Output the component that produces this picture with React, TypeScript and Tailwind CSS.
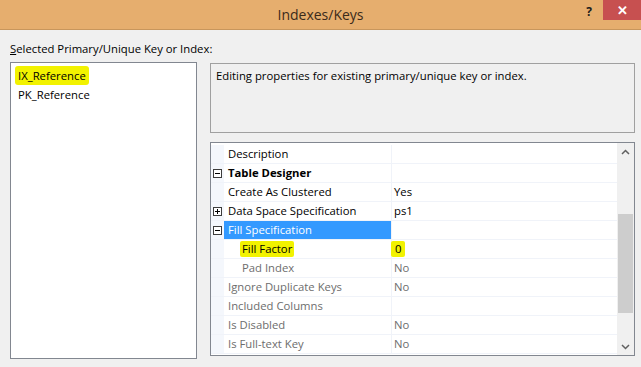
import React from 'react';

type Row = {
  name: string;
  value?: string;
  kind?: 'category' | 'selected';
  toggle?: 'plus' | 'minus';
  indent?: boolean;
  muted?: boolean;
  mark?: boolean;
};

const rows: Row[] = [
  { name: 'Description' },
  { name: 'Table Designer', kind: 'category', toggle: 'minus' },
  { name: 'Create As Clustered', value: 'Yes' },
  { name: 'Data Space Specification', value: 'ps1', toggle: 'plus' },
  { name: 'Fill Specification', kind: 'selected', toggle: 'minus' },
  { name: 'Fill Factor', value: '0', indent: true, mark: true },
  { name: 'Pad Index', value: 'No', indent: true, muted: true },
  { name: 'Ignore Duplicate Keys', value: 'No', muted: true },
  { name: 'Included Columns', muted: true },
  { name: 'Is Disabled', value: 'No', muted: true },
  { name: 'Is Full-text Key', value: 'No', muted: true },
];

function ToggleBox({ type }: { type: 'plus' | 'minus' }) {
  return (
    <svg width="9" height="9" viewBox="0 0 9 9" className="block">
      <rect x="0.5" y="0.5" width="8" height="8" fill="white" stroke="#3c3c3c" />
      <line x1="2" y1="4.5" x2="7" y2="4.5" stroke="#000" />
      {type === 'plus' && <line x1="4.5" y1="2" x2="4.5" y2="7" stroke="#000" />}
    </svg>
  );
}

function PropertyRow({ row }: { row: Row }) {
  const nameColor = row.muted ? 'text-[#6d6d6d]' : 'text-black';
  return (
    <div className="flex h-[19px] border-b border-[#f0f3f9]">
      <div className="w-[13px] flex items-center justify-center bg-[#f4f7fc]">
        {row.toggle && <ToggleBox type={row.toggle} />}
      </div>
      <div
        className={`w-[168px] flex items-center border-r border-[#f0f3f9] ${
          row.kind === 'selected' ? 'bg-[#3399ff]' : ''
        } ${row.indent ? 'pl-[18px]' : 'pl-[4px]'}`}
      >
        <span
          className={`whitespace-nowrap ${row.kind === 'category' ? 'font-bold text-black' : ''} ${
            row.kind === 'selected' ? 'text-white' : nameColor
          } ${row.mark ? 'bg-[#f2f200] px-[2px] -ml-[2px] py-[2px] rounded-[2px]' : ''}`}
        >
          {row.name}
        </span>
      </div>
      <div className="flex-1 flex items-center pl-[2px]">
        {row.value && (
          <span
            className={`${row.muted ? 'text-[#6d6d6d]' : 'text-black'} ${
              row.mark ? 'bg-[#f2f200] px-[4px] -ml-[3px] py-[2px] rounded-[2px]' : ''
            }`}
          >
            {row.value}
          </span>
        )}
      </div>
    </div>
  );
}

export default function App() {
  return (
    <div
      className="w-[641px] h-[367px] bg-[#f0f0f0] overflow-hidden flex flex-col text-[11.3px] leading-none"
      style={{ fontFamily: '"Segoe UI", "Open Sans", sans-serif' }}
    >
      {/* title bar */}
      <div className="h-[30px] bg-[#e6ae6e] border-b border-[#c8965c] grid grid-cols-[1fr_auto_1fr]">
        <div />
        <div className="flex items-center text-[14px] text-[#3a2a1a] pt-[1px]">Indexes/Keys</div>
        <div className="flex justify-end items-start">
          <div className="h-[20px] w-[10px] mt-[2px] flex items-center justify-center text-[12px] font-bold text-[#1c1c1c]">
            ?
          </div>
          <div className="ml-[9px] h-[20px] w-[38px] bg-[#c75050] flex items-center justify-center text-white text-[13px] font-bold">
            ✕
          </div>
        </div>
      </div>

      <div className="flex-1 pl-[10px] pt-[13px]">
        <div className="text-[#000] h-[19px]">
          <span className="underline">S</span>elected Primary/Unique Key or Index:
        </div>
        <div className="flex gap-[13px]">
          {/* key list */}
          <div className="w-[187px] h-[297px] bg-white border border-[#828790] pt-[3px] pl-[4px]">
            <div className="h-[19px] flex items-center">
              <span className="bg-[#f2f200] px-[3px] py-[4px] rounded-[3px]">IX_Reference</span>
            </div>
            <div className="h-[19px] flex items-center pl-[3px]">PK_Reference</div>
          </div>

          {/* right column */}
          <div className="w-[425px] flex flex-col gap-[9px] pt-[1px]">
            <div className="h-[70px] border border-[#a0a0a0] bg-[#f0f0f0] px-[5px] pt-[6px]">
              Editing properties for existing primary/unique key or index.
            </div>
            <div className="h-[214px] border border-[#828790] bg-white flex">
              <div className="flex-1 flex flex-col pt-[2px]">
                {rows.map((r) => (
                  <PropertyRow key={r.name} row={r} />
                ))}
              </div>
              <div className="w-[17px] bg-[#f0f0f0] flex flex-col items-center">
                <div className="h-[17px] flex items-center justify-center">
                  <svg width="9" height="6" viewBox="0 0 9 6">
                    <path d="M1 5 L4.5 1.5 L8 5" fill="none" stroke="#606060" strokeWidth="1.5" />
                  </svg>
                </div>
                <div className="h-[54px]" />
                <div className="w-[15px] h-[99px] bg-[#cdcdcd]" />
                <div className="flex-1" />
                <div className="h-[17px] flex items-center justify-center">
                  <svg width="9" height="6" viewBox="0 0 9 6">
                    <path d="M1 1 L4.5 4.5 L8 1" fill="none" stroke="#606060" strokeWidth="1.5" />
                  </svg>
                </div>
              </div>
            </div>
          </div>
        </div>
      </div>
    </div>
  );
}
